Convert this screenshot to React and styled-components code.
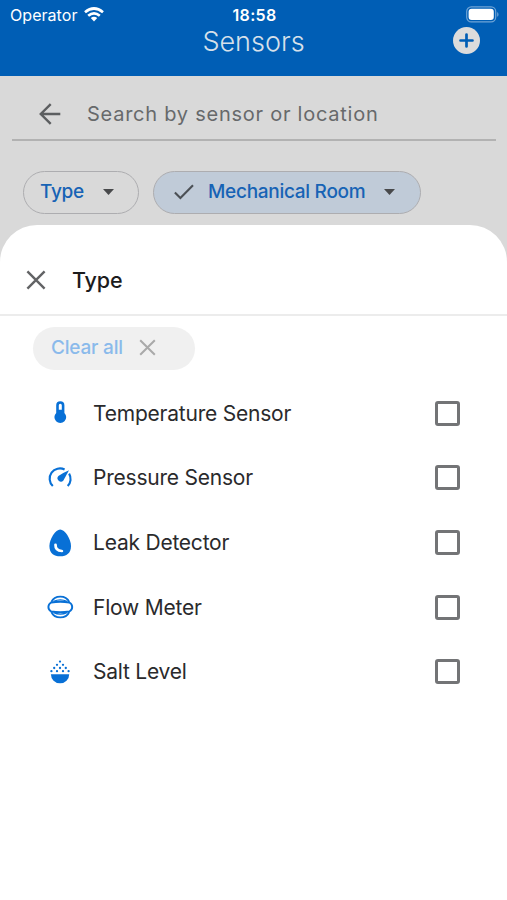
import React from "react";
import styled, { createGlobalStyle } from "styled-components";

const GlobalStyle = createGlobalStyle`
  *, *::before, *::after { box-sizing: border-box; }
  html, body { margin: 0; padding: 0; background: #fff; }
  body { font-family: Inter, "Liberation Sans", sans-serif; }
  svg { display: block; flex: none; }
  button { font-family: inherit; padding: 0; border: 0; background: none; }
`;

const Screen = styled.div`
  display: flex;
  flex-direction: column;
  width: 507px;
  height: 900px;
  overflow: hidden;
  background: #d9d9d9;
`;

const Header = styled.header`
  flex: none;
  height: 76px;
  background: #005eb5;
`;

const StatusBar = styled.div`
  display: grid;
  grid-template-columns: 1fr auto 1fr;
  align-items: center;
  height: 27px;
  padding: 2px 8px 0 10px;
  color: #fff;
`;

const Carrier = styled.div`
  display: flex;
  align-items: center;
  gap: 7px;
  font-size: 16px;
  line-height: 20px;
  letter-spacing: 0.05px;
`;

const Clock = styled.div`
  font-size: 16px;
  font-weight: 600;
  line-height: 20px;
  letter-spacing: 0.3px;
`;

const BatterySlot = styled.div`
  display: flex;
  justify-content: flex-end;
  padding-bottom: 1px;
`;

const TitleBar = styled.div`
  display: grid;
  grid-template-columns: 1fr auto 1fr;
  align-items: center;
  height: 26px;
  padding: 0 27px;
`;

const Title = styled.h1`
  grid-column: 2;
  margin: 0;
  font-size: 27px;
  font-weight: 350;
  line-height: 28px;
  letter-spacing: 0;
  color: #d7e0ea;
`;

const AddButton = styled.button`
  justify-self: end;
  padding-bottom: 2px;
`;

const SearchBar = styled.div`
  display: flex;
  flex: none;
  align-items: center;
  gap: 25px;
  height: 65px;
  margin: 0 11px 0 12px;
  padding: 12px 26px 0;
  border-bottom: 2px solid #b2b2b2;
`;

const SearchHint = styled.span`
  padding-top: 1px;
  font-size: 20px;
  line-height: 24px;
  letter-spacing: 0.75px;
  color: #67696b;
  white-space: nowrap;
`;

const Chips = styled.div`
  display: flex;
  flex: none;
  gap: 14px;
  height: 84px;
  padding: 30px 0 0 23px;
`;

const Chip = styled.button`
  display: flex;
  align-items: center;
  flex: none;
  width: ${(p) => p.$width}px;
  height: 43px;
  padding: 0 0 2px ${(p) => (p.$selected ? 20 : 16)}px;
  border: 1.5px solid #adadb0;
  border-radius: 22px;
  background: ${(p) => (p.$selected ? "#c0cbd8" : "transparent")};
`;

const ChipLabel = styled.span`
  margin: 0 19px 0 ${(p) => (p.$afterIcon ? 14 : 0)}px;
  font-size: 19px;
  font-weight: 500;
  line-height: 24px;
  letter-spacing: -0.28px;
  color: #1763b5;
  white-space: nowrap;
`;

const Sheet = styled.section`
  flex: 1;
  border-radius: 37px 37px 0 0;
  background: #fff;
`;

const SheetHeader = styled.div`
  display: flex;
  align-items: center;
  gap: 26px;
  height: 91px;
  padding: 20px 0 0 26px;
  border-bottom: 2px solid #ececec;
`;

const SheetTitle = styled.h2`
  margin: 0;
  padding-top: 1px;
  font-size: 21.5px;
  font-weight: 500;
  line-height: 26px;
  letter-spacing: -0.1px;
  color: #1c1c1d;
`;

const ClearButton = styled.button`
  display: flex;
  align-items: center;
  gap: 16px;
  width: 162px;
  height: 43px;
  margin: 10.5px 0 0 33px;
  padding: 0 0 1px 18px;
  border-radius: 22px;
  background: #f0f0f0;
  font-size: 19px;
  font-weight: 500;
  line-height: 24px;
  letter-spacing: -0.2px;
  color: #8abaeb;
`;

const SensorList = styled.ul`
  margin: 11.3px 0 0;
  padding: 0;
  list-style: none;
`;

const SensorRow = styled.li`
  display: flex;
  align-items: center;
  height: 64.7px;
  padding: 0 47px 0 46px;
`;

const SensorName = styled.span`
  flex: 1;
  margin-left: 19px;
  padding-top: 1px;
  font-size: 21px;
  line-height: 26px;
  letter-spacing: -0.22px;
  color: #2a2a2c;
`;

const Checkbox = styled.span`
  flex: none;
  width: 25px;
  height: 25px;
  border: 3px solid #737476;
  border-radius: 3px;
`;

const BLUE = "#0870d6";

function WifiIcon() {
  return (
    <svg width="20" height="15" viewBox="0 0 20 15" fill="none" stroke="#fff" strokeWidth="2.7">
      <path d="M1 5.2 Q10 -2.2 19 5.2" />
      <path d="M4.2 8.7 Q10 3.9 15.8 8.7" />
      <path d="M6.8 11 Q10 8.5 13.2 11 L10 14.5Z" fill="#fff" stroke="none" />
    </svg>
  );
}

function BatteryIcon() {
  return (
    <svg width="33" height="17" viewBox="0 0 33 17">
      <rect x=".7" y=".9" width="29" height="15" rx="4.6" fill="none" stroke="#6fa4d6" strokeWidth="1.2" />
      <rect x="2.6" y="2.8" width="25.2" height="11.2" rx="3" fill="#fff" />
      <path d="M31.2 6v4.8q1.3-.8 1.3-2.4t-1.3-2.4" fill="#6fa4d6" />
    </svg>
  );
}

function AddIcon() {
  return (
    <svg width="27" height="27" viewBox="0 0 27 27">
      <circle cx="13.5" cy="13.5" r="13.5" fill="#dcdcdc" />
      <path d="M13.5 7.5v12M7.5 13.5h12" stroke="#005eb5" strokeWidth="2.7" strokeLinecap="round" />
    </svg>
  );
}

function BackIcon() {
  return (
    <svg width="24" height="24" viewBox="0 0 24 24" fill="none" stroke="#5c5e60" strokeWidth="2.4">
      <path d="M22.3 12H3M12.7 2.2 2.8 12l9.9 9.8" />
    </svg>
  );
}

function CloseIcon({ size, color, weight }) {
  return (
    <svg width={size} height={size} viewBox="0 0 20 20" fill="none" stroke={color} strokeWidth={weight}>
      <path d="m1.4 1.4 17.2 17.2M18.6 1.4 1.4 18.6" />
    </svg>
  );
}

function CheckIcon() {
  return (
    <svg width="20" height="16" viewBox="0 0 20 16" fill="none" stroke="#4b5055" strokeWidth="2.1">
      <path d="m.9 8.4 5.5 5.5L19 1.2" />
    </svg>
  );
}

function CaretIcon() {
  return (
    <svg width="11" height="6" viewBox="0 0 11 6">
      <path d="M0 0h11L5.5 6z" fill="#48494b" />
    </svg>
  );
}

function ThermometerIcon() {
  return (
    <svg width="28" height="28" viewBox="0 0 28 28">
      <path
        fill={BLUE}
        fillRule="evenodd"
        d="M10.2 6.3a4.1 4.1 0 0 1 8.2 0v7.6a5.9 5.9 0 1 1-8.2 0zM12.8 6.3v4.4h3V6.3a1.5 1.5 0 0 0-3 0z"
      />
    </svg>
  );
}

function GaugeIcon() {
  return (
    <svg width="28" height="28" viewBox="0 0 28 28">
      <path
        d="M6.8 22.1A10.3 10.3 0 0 1 18.6 5.5M23.1 9.6A10.3 10.3 0 0 1 21.7 22.1"
        fill="none"
        stroke={BLUE}
        strokeWidth="2.1"
      />
      <path d="M23 6.2 17.4 16.4a3.1 3.1 0 1 1-5-4.4Q16 9.2 23 6.2z" fill={BLUE} />
    </svg>
  );
}

function LeakIcon() {
  return (
    <svg width="28" height="28" viewBox="0 0 28 28">
      <path d="M14.2.4C18.7.4 25 9.8 25 17S20.5 27.3 14.2 27.3 3.4 24.3 3.4 17 9.7.4 14.2.4z" fill={BLUE} />
      <path d="M9.5 15.8q-.2 5.9 6.4 6.2" fill="none" stroke="#fff" strokeWidth="2.7" strokeLinecap="round" />
    </svg>
  );
}

function FlowIcon() {
  return (
    <svg width="28" height="28" viewBox="0 0 28 28" fill="none" stroke={BLUE} strokeWidth="1.9">
      <path d="M5.4 8.9C6.9 5.6 10 3.6 14.3 3.6s7.4 2 8.9 5.3M5.4 19.1c1.5 3.3 4.6 5.3 8.9 5.3s7.4-2 8.9-5.3" />
      <path d="M7.6 8.4q6.7-3 13.4 0M7.6 19.6q6.7 3 13.4 0" strokeWidth="1.4" />
      <path d="M5.2 9.5q9.1-1.4 18.2 0 2.8 1.5 2.8 4.5t-2.8 4.5q-9.1 1.4-18.2 0-2.8-1.5-2.8-4.5t2.8-4.5z" />
    </svg>
  );
}

const SALT_GRAINS = [
  [14, 3.6],
  [11, 6.8], [17, 6.8],
  [8.2, 10], [14, 10], [19.8, 10],
  [5.4, 13.2], [11, 13.2], [17, 13.2], [22.6, 13.2],
];

function SaltIcon() {
  return (
    <svg width="28" height="28" viewBox="0 0 28 28" fill={BLUE}>
      {SALT_GRAINS.map(([x, y]) => (
        <circle key={`${x}-${y}`} cx={x} cy={y} r="1.15" />
      ))}
      <path d="M4.9 16.2h18.3a9.15 9.15 0 0 1-18.3 0z" />
    </svg>
  );
}

const SENSORS = [
  { name: "Temperature Sensor", Icon: ThermometerIcon },
  { name: "Pressure Sensor", Icon: GaugeIcon },
  { name: "Leak Detector", Icon: LeakIcon },
  { name: "Flow Meter", Icon: FlowIcon },
  { name: "Salt Level", Icon: SaltIcon },
];

export default function App() {
  return (
    <>
      <GlobalStyle />
      <Screen>
        <Header>
          <StatusBar>
            <Carrier>
              Operator
              <WifiIcon />
            </Carrier>
            <Clock>18:58</Clock>
            <BatterySlot>
              <BatteryIcon />
            </BatterySlot>
          </StatusBar>
          <TitleBar>
            <Title>Sensors</Title>
            <AddButton aria-label="Add sensor">
              <AddIcon />
            </AddButton>
          </TitleBar>
        </Header>
        <SearchBar>
          <BackIcon />
          <SearchHint>Search by sensor or location</SearchHint>
        </SearchBar>
        <Chips>
          <Chip $width={116}>
            <ChipLabel>Type</ChipLabel>
            <CaretIcon />
          </Chip>
          <Chip $width={268} $selected>
            <CheckIcon />
            <ChipLabel $afterIcon>Mechanical Room</ChipLabel>
            <CaretIcon />
          </Chip>
        </Chips>
        <Sheet>
          <SheetHeader>
            <CloseIcon size={20} color="#626365" weight={2.4} />
            <SheetTitle>Type</SheetTitle>
          </SheetHeader>
          <ClearButton>
            Clear all
            <CloseIcon size={17} color="#a9a9a9" weight={2.4} />
          </ClearButton>
          <SensorList>
            {SENSORS.map(({ name, Icon }) => (
              <SensorRow key={name}>
                <Icon />
                <SensorName>{name}</SensorName>
                <Checkbox role="checkbox" aria-checked="false" aria-label={name} />
              </SensorRow>
            ))}
          </SensorList>
        </Sheet>
      </Screen>
    </>
  );
}
